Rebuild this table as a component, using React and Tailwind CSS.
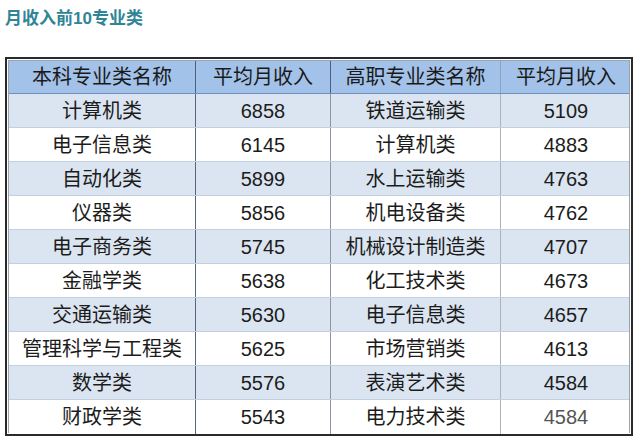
export default function App() {
  const rows = [
    ["计算机类", "6858", "铁道运输类", "5109"],
    ["电子信息类", "6145", "计算机类", "4883"],
    ["自动化类", "5899", "水上运输类", "4763"],
    ["仪器类", "5856", "机电设备类", "4762"],
    ["电子商务类", "5745", "机械设计制造类", "4707"],
    ["金融学类", "5638", "化工技术类", "4673"],
    ["交通运输类", "5630", "电子信息类", "4657"],
    ["管理科学与工程类", "5625", "市场营销类", "4613"],
    ["数学类", "5576", "表演艺术类", "4584"],
    ["财政学类", "5543", "电力技术类", "4584"],
  ];
  const font = { fontFamily: '"Liberation Sans", "Noto Sans CJK SC", sans-serif' };
  return (
    <div className="w-[640px] h-[440px] bg-white overflow-hidden" style={font}>
      <div className="pl-[5px] pt-[8px] h-[57px] text-[17px] leading-[22px] font-bold text-[#2f8595]">
        月收入前10专业类
      </div>
      <div className="ml-[5px] w-[628px] h-[379px] border-2 border-[#2a2a2a] p-px bg-white">
        <div className="border border-[#9aa4ae] h-full">
          <div className="grid grid-cols-[187px_135px_170px_130px] h-[33px] bg-[#a3c2e9] border-b border-[#6f8fbf] text-[20px] text-[#1a1a1a]">
            <div className="flex items-center justify-center border-r border-[#4d607a]">本科专业类名称</div>
            <div className="flex items-center justify-center border-r border-[#4d607a]">平均月收入</div>
            <div className="flex items-center justify-center border-r border-[#8fa3bd]">高职专业类名称</div>
            <div className="flex items-center justify-center">平均月收入</div>
          </div>
          {rows.map((r, i) => (
            <div
              key={i}
              className={
                "grid grid-cols-[187px_135px_170px_130px] h-[34px] text-[20px] text-[#1c1c1c] border-b border-[#c3d0df] last:border-b-0 " +
                (i % 2 === 0 ? "bg-[#dbe5f1]" : "bg-white")
              }
            >
              <div className="flex items-center justify-center border-r border-[#56667c]">{r[0]}</div>
              <div className="flex items-center justify-center border-r border-[#8a96a4]">{r[1]}</div>
              <div className="flex items-center justify-center border-r border-[#aab3bd]">{r[2]}</div>
              <div className={"flex items-center justify-center " + (i === 9 ? "text-[#555]" : "")}>{r[3]}</div>
            </div>
          ))}
        </div>
      </div>
    </div>
  );
}
